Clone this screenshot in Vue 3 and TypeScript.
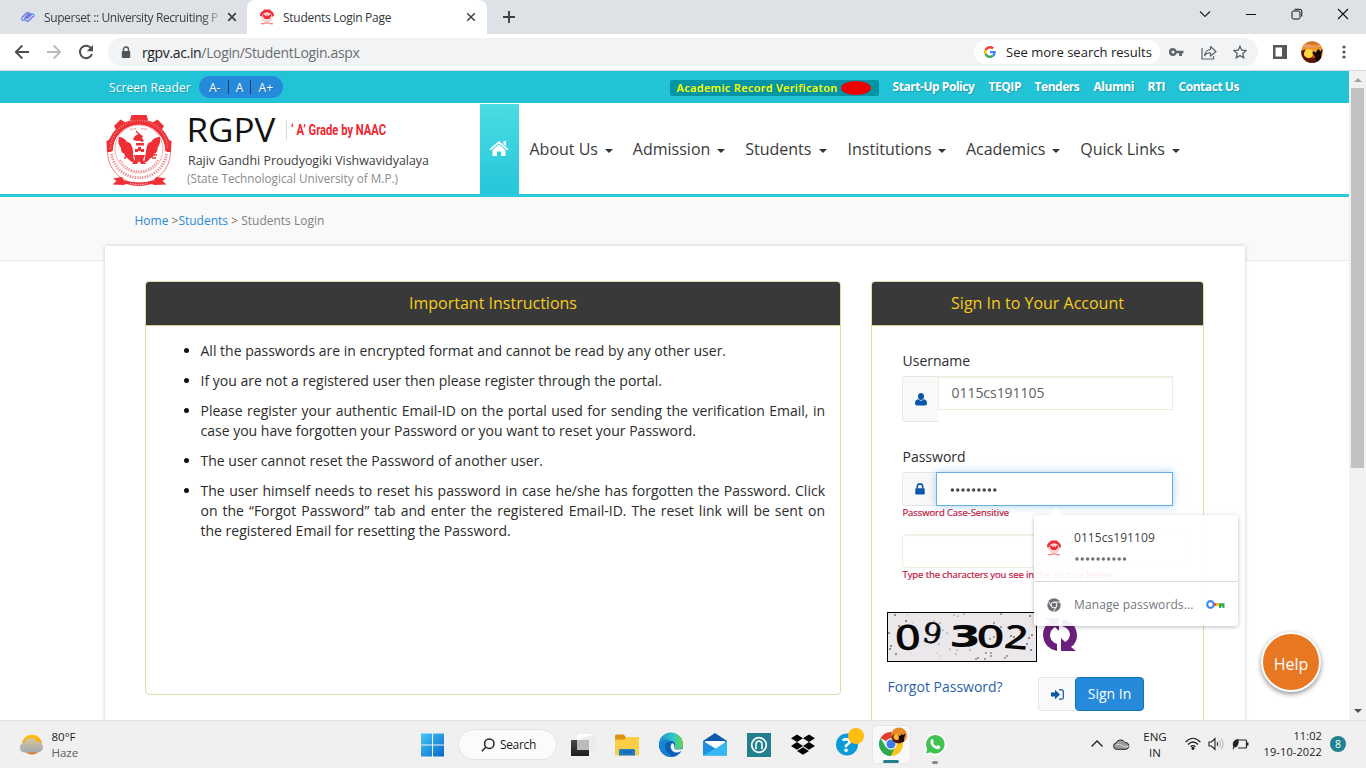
<script setup lang="ts">
interface NavItem { label: string }

const navItems: NavItem[] = [
  { label: 'About Us' },
  { label: 'Admission' },
  { label: 'Students' },
  { label: 'Institutions' },
  { label: 'Academics' },
  { label: 'Quick Links' },
]

const topLinks: string[] = ['Start-Up Policy', 'TEQIP', 'Tenders', 'Alumni', 'RTI', 'Contact Us']

const instructions: string[] = [
  'All the passwords are in encrypted format and cannot be read by any other user.',
  'If you are not a registered user then please register through the portal.',
  'Please register your authentic Email-ID on the portal used for sending the verification Email, in case you have forgotten your Password or you want to reset your Password.',
  'The user cannot reset the Password of another user.',
  'The user himself needs to reset his password in case he/she has forgotten the Password. Click on the “Forgot Password” tab and enter the registered Email-ID. The reset link will be sent on the registered Email for resetting the Password.',
]

// Deterministic speckles for the captcha background
const specks = Array.from({ length: 64 }, (_, i) => ({
  x: (i * 37 + ((i * i * 13) % 29)) % 146 + 2,
  y: (i * 17 + ((i * i * 7) % 23)) % 46 + 2,
  r: 0.35 + (i % 4) * 0.15,
}))
</script>

<template>
  <div class="screen">
    <header class="tabstrip">
      <div class="tab idle">
        <svg class="fav" width="16" height="16" viewBox="0 0 16 16" fill="none" stroke-width="1.300" stroke-linecap="round">
          <path d="M2 8.500l4-4q2-1.500 3 0l-4 4M4 11l6.500-6.500M6 11.500q1.500 1.500 3 0l4-4M7.500 9.500l4.500-4.500" stroke="#6a78e6" />
          <path d="M1.500 9.500q0 2 2.500 2M12 5q3 .3 2 2.500" stroke="#6aa5ee" />
        </svg>
        <span class="tab-title fade">Superset :: University Recruiting P</span>
        <svg class="x" width="10" height="10" viewBox="0 0 10 10"><path d="M1.200 1.200l7.600 7.600M8.800 1.200L1.200 8.800" stroke="#3c4043" stroke-width="1.700" /></svg>
      </div>
      <div class="tab active">
        <svg class="fav" width="16" height="16" viewBox="0 0 16 16">
          <circle cx="8" cy="7" r="6.300" fill="#fbd3d5" />
          <path d="M1 7Q1 3 4 2l1-1.500h6L12 2q3 1 3 5l-1.500.5Q12.500 3.500 8 3.200 3.500 3.500 2.500 7.500z" fill="#ee2a33" />
          <path d="M3.500 5q2 .3 3.500 2.500L8 5.500l1 2Q10.500 5.300 12.500 5q0 3.500-3 5h-3q-3-1.500-3-5z" fill="#ee2a33" />
          <path d="M2 14.300h3.500v1H2zM10.500 14.300H14v1h-3.500zM5.500 13.600h5v1h-5z" fill="#f0555c" />
        </svg>
        <span class="tab-title">Students Login Page</span>
        <svg class="x" width="10" height="10" viewBox="0 0 10 10"><path d="M1.200 1.200l7.600 7.600M8.800 1.200L1.200 8.800" stroke="#3c4043" stroke-width="1.500" /></svg>
      </div>
      <svg class="plus" width="14" height="14" viewBox="0 0 14 14"><path d="M7 1v12M1 7h12" stroke="#3c4043" stroke-width="1.900" /></svg>
      <div class="winctl">
        <svg width="12" height="12" viewBox="0 0 12 12"><path d="M1 3.500l5 5 5-5" fill="none" stroke="#222" stroke-width="1.100" /></svg>
        <svg width="12" height="12" viewBox="0 0 12 12"><path d="M1 6.500h10" stroke="#111" /></svg>
        <svg width="12" height="12" viewBox="0 0 12 12" fill="none" stroke="#111"><rect x="1" y="3" width="8" height="8" rx="1.500" /><path d="M3.500 1.300H9Q10.800 1.300 10.800 3v5.500" /></svg>
        <svg width="12" height="12" viewBox="0 0 12 12"><path d="M1 1l10 10M11 1L1 11" stroke="#111" stroke-width="1.100" /></svg>
      </div>
    </header>

    <div class="toolbar">
      <div class="navbtns">
        <svg width="16" height="16" viewBox="0 0 16 16" fill="none" stroke="#4a4d51" stroke-width="1.800"><path d="M15 8H2M8.300 1.500L1.800 8l6.500 6.500" /></svg>
        <svg width="16" height="16" viewBox="0 0 16 16" fill="none" stroke="#b9bbbe" stroke-width="1.800"><path d="M1 8h13M7.700 1.500L14.200 8l-6.500 6.500" /></svg>
        <svg width="16" height="16" viewBox="0 0 16 16"><path d="M13.300 4.500A6.200 6.200 0 1 0 14 10" fill="none" stroke="#4a4d51" stroke-width="2" /><path d="M15 1v6.200H8.800z" fill="#4a4d51" /></svg>
      </div>
      <div class="omnibox">
        <svg class="lock" width="10" height="13" viewBox="0 0 10 13"><path d="M2.500 5.500V3.500a2.500 2.500 0 0 1 5 0v2" fill="none" stroke="#505357" stroke-width="1.400" /><rect x=".8" y="5" width="8.400" height="7" rx="1" fill="#505357" /></svg>
        <span class="url"><b>rgpv.ac.in</b>/Login/StudentLogin.aspx</span>
        <div class="chip">
          <svg width="12" height="12" viewBox="0 0 48 48"><path fill="#EA4335" d="M24 9.500c3.540 0 6.710 1.220 9.210 3.600l6.850-6.850C35.900 2.380 30.470 0 24 0 14.620 0 6.510 5.380 2.560 13.220l7.980 6.190C12.430 13.720 17.740 9.500 24 9.500z" /><path fill="#4285F4" d="M46.980 24.550c0-1.570-.15-3.090-.38-4.550H24v9.020h12.940c-.58 2.960-2.260 5.480-4.780 7.180l7.730 6c4.510-4.180 7.090-10.360 7.090-17.650z" /><path fill="#FBBC05" d="M10.530 28.590a14.500 14.500 0 0 1 0-9.180l-7.980-6.190a24 24 0 0 0 0 21.560z" /><path fill="#34A853" d="M24 48c6.480 0 11.930-2.130 15.890-5.810l-7.730-6c-2.150 1.450-4.920 2.300-8.160 2.300-6.260 0-11.570-4.220-13.470-9.910l-7.980 6.190C6.510 42.620 14.620 48 24 48z" /></svg>
          <span>See more search results</span>
        </div>
        <svg class="key" width="15" height="8" viewBox="0 0 15 8"><path fill-rule="evenodd" fill="#5f6368" d="M4 0a4 4 0 0 1 3.700 2.700H14.500v2.600H13V8h-2.800V5.300H7.700A4 4 0 1 1 4 0zm0 2.500a1.500 1.500 0 1 0 0 3 1.500 1.500 0 0 0 0-3z" /></svg>
        <svg class="share" width="16" height="15" viewBox="0 0 16 15" fill="none" stroke="#5f6368" stroke-width="1.200"><path d="M1 3v11h11.500v-3" /><path d="M3.500 10.500Q4.500 5 9.500 4.500V1.500l5.500 5-5.500 4.500V8Q6 7.500 3.500 10.500z" stroke-linejoin="round" /></svg>
        <svg class="star" width="14" height="14" viewBox="0 0 14 14"><path d="M7 1.200l1.700 4 4.300.4-3.200 2.900.9 4.300L7 10.600l-3.700 2.200.9-4.300L1 5.600l4.300-.4z" fill="none" stroke="#5f6368" stroke-width="1.300" /></svg>
      </div>
      <svg class="side" width="14" height="14" viewBox="0 0 14 14"><path fill-rule="evenodd" d="M0 0h14v14H0zM2.500 2.500v9H9v-9z" fill="#55585c" /></svg>
      <svg class="avatar" width="22" height="22" viewBox="0 0 22 22">
        <defs>
          <clipPath id="av"><circle cx="11" cy="11" r="10.800" /></clipPath>
          <linearGradient id="sky" x1="0" y1="0" x2="0" y2="1"><stop offset="0" stop-color="#c8631c" /><stop offset=".5" stop-color="#ffae2e" /><stop offset=".7" stop-color="#d2500c" /><stop offset="1" stop-color="#6a1a06" /></linearGradient>
        </defs>
        <g clip-path="url(#av)"><rect width="22" height="22" fill="url(#sky)" /><circle cx="7.500" cy="12.500" r="4.500" fill="#ffd83f" /><path d="M0 5q5-3 10-1t12-1v2Q11 8 0 6z" fill="#e9a070" /><path d="M12 10l3 1.500 1.500-3h2l.5 2.500 2-3 1 .5-2 6v7h-7l1-6-2.500-3z" fill="#150806" /><path d="M0 10q3-2 5-1.500Q2.500 11 3 15l3 2h8l2 5H0z" fill="#5a1506" /></g>
      </svg>
      <svg class="kebab" width="4" height="14" viewBox="0 0 4 14" fill="#505357"><circle cx="2" cy="2" r="1.600" /><circle cx="2" cy="7" r="1.600" /><circle cx="2" cy="12" r="1.600" /></svg>
    </div>

    <div class="viewport">
      <main class="page">
        <div class="topbar">
          <span class="reader">Screen Reader</span>
          <div class="sizes"><span>A-</span><i></i><span>A</span><i></i><span>A+</span></div>
          <div class="verify"><span>Academic Record Verificaton</span><em></em></div>
          <nav class="toplinks"><a v-for="l in topLinks" :key="l">{{ l }}</a></nav>
        </div>

        <div class="masthead">
          <svg class="brand" width="335" height="91" viewBox="105 103 335 91">
            <g>
              <circle cx="139" cy="149" r="31" fill="#fff" />
              <path d="M110 151A29 29 0 1 1 168 151" fill="none" stroke="#ee2f36" stroke-width="5.500" />
              <path d="M131.500 115h15l1.500 5h-18zM114 126l6.500-6.500 5 3-8.500 8.500zM164 126l-6.500-6.500-5 3 8.500 8.500zM106.500 141l5-2v13h-4.500zM171.500 141l-5-2v13h4.500z" fill="#ee2f36" />
              <path d="M110.500 149A28.500 28.500 0 1 1 167.500 149" fill="none" stroke="#fff" stroke-width="1.500" stroke-dasharray="1 1.500" opacity=".45" />
              <path d="M107.500 152a31.500 31.500 0 0 0 63 0" fill="none" stroke="#f08085" stroke-width="1" />
              <circle cx="139" cy="149" r="24" fill="#fff" stroke="#f3999c" stroke-width=".8" />
              <path d="M111.500 154a27.800 27.800 0 0 0 55 0" fill="none" stroke="#ef8a8e" stroke-width="2.800" stroke-dasharray="1.300 1.200" />
              <path d="M120 160a21.500 21.500 0 0 0 38 0" fill="none" stroke="#ef8a8e" stroke-width="2" stroke-dasharray="1.300 1.200" />
              <path d="M130 129.500l6-1M141 128.500l7 1" fill="none" stroke="#f3999c" stroke-width="1.500" stroke-dasharray="1.500 .8" />
              <path d="M119 137Q124 137 127 142 132 142 133 151L133.500 158 135 162Q131 163 127.500 158 125 158 124.500 154 120.500 152 121 148 117 143 119 137z" fill="#ee2f36" />
              <path d="M160 137Q154 137 151 142 147 142 146 151L145 158 144 162Q147 163 150.500 158 153 158 154 154 158 152 157.500 148 161 143 160 137z" fill="#ee2f36" />
              <path d="M133 140q1-5 6-6l4 2-1 2 2 3-2 1q-3-2-5-1zM136 143h8v2.500h-8zM135 149h3v3h-3zM141 149h3v3h-3zM138 147h3v4h-3z" fill="#ee2f36" />
              <path d="M134 155h11l-2 5 3 4h-5l-2-3-2 3h-5l3-4z" fill="#ee2f36" />
              <path d="M136 131l5 5" stroke="#ee2f36" stroke-width="1.300" />
              <path d="M124 158h2M151 155h6M152 158h4" stroke="#ee2f36" stroke-width="1.500" />
              <path d="M113 178.500l9-1.500 2 3.500q15 4 30 0l2-3.500 10 1.500-3.500 2.500 4 3.500-12 .5-3-1q-12.500 4-25 0l-3 1-11-.5 4-3.500z" fill="#ee2f36" />
              <path d="M130 183.500q9 1.800 18 0" fill="none" stroke="#fff" stroke-width="1" stroke-dasharray="1.300 1.200" />
            </g>
            <text x="186.500" y="142" class="b1" textLength="89" lengthAdjust="spacingAndGlyphs">RGPV</text>
            <path d="M286.500 120v20" stroke="#d6dadd" />
            <text x="291" y="135" class="b2" textLength="95" lengthAdjust="spacingAndGlyphs">‘ A’ Grade by NAAC</text>
            <text x="188" y="165" class="b3" textLength="241" lengthAdjust="spacingAndGlyphs">Rajiv Gandhi Proudyogiki Vishwavidyalaya</text>
            <text x="187" y="183" class="b4" textLength="211" lengthAdjust="spacingAndGlyphs">(State Technological University of M.P.)</text>
          </svg>
          <div class="home">
            <svg width="20" height="17" viewBox="0 0 20 17" fill="#fff"><path d="M10 1l9.500 8-1.200 1.300L10 3.400 1.700 10.300.5 9z" /><path d="M14.500 1H17v5l-2.500-2zM3.500 10L10 4.600 16.500 10v6H12v-4.500H8V16H3.500z" /></svg>
          </div>
          <nav class="mainnav">
            <a v-for="n in navItems" :key="n.label"><span>{{ n.label }}</span><i class="caret"></i></a>
          </nav>
        </div>

        <div class="crumbs"><a>Home</a><b>&nbsp;&gt;</b><a>Students</a><b>&nbsp;&gt;&nbsp;</b><span>Students Login</span></div>

        <div class="card">
          <section class="panel info">
            <h2>Important Instructions</h2>
            <ul><li v-for="t in instructions" :key="t">{{ t }}</li></ul>
          </section>

          <section class="panel login">
            <h2>Sign In to Your Account</h2>
            <div class="form">
              <label>Username</label>
              <div class="group user">
                <div class="addon"><svg width="12" height="13" viewBox="0 0 12 13" fill="#0b56a8"><ellipse cx="6" cy="3.600" rx="3" ry="3.500" /><path d="M3 6.300Q6 9 9 6.300q3 .4 3 4.200 0 2-2 2H2q-2 0-2-2 0-3.800 3-4.200z" /></svg></div>
                <div class="input">0115cs191105</div>
              </div>
              <label>Password</label>
              <div class="group pass">
                <div class="addon"><svg width="10" height="12" viewBox="0 0 10 12"><path d="M2.300 5.500V3.600a2.700 2.700 0 0 1 5.400 0v2" fill="none" stroke="#0b56a8" stroke-width="1.600" /><rect x=".3" y="5.200" width="9.400" height="6.300" rx=".8" fill="#0b56a8" /></svg></div>
                <div class="input focus"><svg width="48" height="6" viewBox="0 0 48 6"><circle v-for="n in 9" :key="n" :cx="n * 5.3 - 2.9" cy="3" r="1.750" fill="#484848" /></svg></div>
              </div>
              <small>Password Case-Sensitive</small>
              <div class="input captcha-in"></div>
              <small>Type the characters you see in the picture below</small>
            </div>
            <div class="captcha">
              <svg class="cap" width="150" height="50" viewBox="0 0 150 50">
                <rect x=".5" y=".5" width="149" height="49" fill="#ece7ea" stroke="#000" />
                <circle v-for="(s, i) in specks" :key="i" :cx="s.x" :cy="s.y" :r="s.r" fill="#1c1c14" />
                <g class="digits">
                  <text x="8" y="38" font-size="35" textLength="26" lengthAdjust="spacingAndGlyphs" transform="rotate(-4 20 28)">0</text>
                  <text x="36" y="31" class="nine" font-size="28" textLength="19" lengthAdjust="spacingAndGlyphs" transform="rotate(10 45 20)">9</text>
                  <text x="62" y="34.500" class="three" font-size="30" textLength="32" lengthAdjust="spacingAndGlyphs">3</text>
                  <text x="89.500" y="36" font-size="32" textLength="28" lengthAdjust="spacingAndGlyphs">0</text>
                  <text x="117" y="37" font-size="33" textLength="24" lengthAdjust="spacingAndGlyphs" transform="rotate(5 130 27)">2</text>
                </g>
              </svg>
              <svg class="refresh" width="36" height="36" viewBox="0 0 36 36" fill="#6a1f7c"><path d="M15 34Q2 31 1 18 1 9 8 5L3 1h14v13l-4-4q-5 3-5 9 1 6 7 8z" /><path d="M20 2Q34 5 35 18q0 8-6 12l5 4H19V21l4 4q5-3 5-8-1-6-8-8z" /></svg>
            </div>
            <div class="actions">
              <a>Forgot Password?</a>
              <div class="addon"><svg width="13" height="11" viewBox="0 0 13 11"><path d="M0 3.500h4V.8l5 4.700-5 4.700V7.500H0z" fill="#0b56a8" /><path d="M8 .8h2.500q1.800 0 1.800 1.500v6.400q0 1.500-1.800 1.500H8" fill="none" stroke="#0b56a8" stroke-width="1.200" /></svg></div>
              <button>Sign In</button>
            </div>
          </section>
        </div>

        <div class="popup">
          <div class="row account">
            <svg width="16" height="16" viewBox="0 0 16 16">
              <circle cx="8" cy="7" r="6.300" fill="#fbd3d5" />
              <path d="M1 7Q1 3 4 2l1-1.500h6L12 2q3 1 3 5l-1.500.5Q12.500 3.500 8 3.200 3.500 3.500 2.500 7.500z" fill="#ee2a33" />
              <path d="M3.500 5q2 .3 3.500 2.500L8 5.500l1 2Q10.500 5.300 12.500 5q0 3.500-3 5h-3q-3-1.500-3-5z" fill="#ee2a33" />
              <path d="M2 14.300h3.500v1H2zM10.500 14.300H14v1h-3.500zM5.500 13.600h5v1h-5z" fill="#f0555c" />
            </svg>
            <div><p>0115cs191109</p><svg class="dots" width="54" height="6" viewBox="0 0 54 6"><circle v-for="n in 10" :key="n" :cx="n * 5.28 - 2.3" cy="3" r="1.750" fill="#6f7377" /></svg></div>
          </div>
          <div class="row manage">
            <svg width="14" height="14" viewBox="0 0 14 14"><circle cx="7" cy="7" r="6.700" fill="#6f7377" /><circle cx="7" cy="7" r="2.900" fill="#6f7377" stroke="#fff" stroke-width="1" /><path d="M7 4.100h6M4.500 8.500l-3-5M9.500 8.500l-3 5" stroke="#fff" stroke-width=".9" /></svg>
            <span>Manage passwords...</span>
            <svg class="gkey" width="19" height="9" viewBox="0 0 19 9"><circle cx="4.500" cy="4.500" r="3.300" fill="none" stroke="#4285f4" stroke-width="2.200" /><path d="M8 3.200h3v2.600H8z" fill="#ea4335" /><path d="M10 3.200h3.500v2.600H10z" fill="#fbbc05" /><path d="M13 3.200h5.500V8h-1.800V6.500h-1.500V8H13z" fill="#34a853" /></svg>
          </div>
        </div>
        <div class="help">Help</div>
      </main>

      <aside class="scroll"><i class="up"></i><div class="thumb"></div><i class="down"></i></aside>
    </div>

    <footer class="taskbar">
      <div class="weather">
        <svg width="26" height="24" viewBox="0 0 26 24">
          <defs><linearGradient id="sun" x1="0" y1="0" x2="0" y2="1"><stop offset="0" stop-color="#fdc70c" /><stop offset="1" stop-color="#f2691e" /></linearGradient><linearGradient id="cl" x1="0" y1="0" x2="0" y2="1"><stop offset="0" stop-color="#d4c8a4" /><stop offset="1" stop-color="#9fa9b5" /></linearGradient></defs>
          <circle cx="13" cy="11.500" r="10" fill="url(#sun)" />
          <path d="M6 19.500a5 5 0 0 1-.5-10 7 7 0 0 1 12.500-1A5.500 5.500 0 0 1 19 19.500z" fill="url(#cl)" opacity=".95" />
        </svg>
        <div><p>80°F</p><p class="dim">Haze</p></div>
      </div>
      <div class="apps">
        <div class="slot"><svg width="24" height="24" viewBox="0 0 24 24"><defs><linearGradient id="win" x1="0" y1="0" x2="1" y2="1"><stop offset="0" stop-color="#45c8f8" /><stop offset="1" stop-color="#0669c8" /></linearGradient></defs><path fill="url(#win)" d="M1 .5h11v11H1zM13 .5h11v11H13zM1 12.500h11v11H1zM13 12.500h11v11H13z" /></svg></div>
        <div class="search"><svg width="14" height="14" viewBox="0 0 14 14" fill="none" stroke="#222" stroke-width="1.500"><circle cx="8.300" cy="5.700" r="4.700" /><path d="M5 9L.8 13.200" /></svg><span>Search</span></div>
        <div class="slot view"><svg width="24" height="24" viewBox="0 0 24 24"><defs><linearGradient id="tv" x1="0" y1="0" x2="0" y2="1"><stop offset="0" stop-color="#4a4a4a" /><stop offset="1" stop-color="#1d1d1d" /></linearGradient></defs><rect x="6" y="1" width="18" height="16" fill="#ececec" stroke="#ddd" stroke-width=".5" /><path d="M6 1h18l-18 6z" fill="#fff" /><rect y="7" width="18" height="16" rx=".5" fill="url(#tv)" /><rect x="6" y="7" width="12" height="10" fill="#bbb" /></svg></div>
        <div class="slot"><svg width="24" height="24" viewBox="0 0 24 24"><path d="M0 3Q0 1.500 1.500 1.500h7L11 4v4H0z" fill="#d99412" /><path d="M0 6.500h9L11.500 4H23q1 0 1 1v16.500q0 1-1 1H1q-1 0-1-1z" fill="#fcce45" /><path d="M4 22.500v-5q0-1.500 1.500-1.500h13q1.500 0 1.500 1.500v5z" fill="#1979c4" /><path d="M8 18.500h8v1H8z" fill="#0d5797" /></svg></div>
        <div class="slot"><svg width="26" height="26" viewBox="0 0 26 26"><defs><linearGradient id="e1" x1="0" y1="0" x2="1" y2="0"><stop offset="0" stop-color="#1a8fd8" /><stop offset=".6" stop-color="#31c5c4" /><stop offset="1" stop-color="#6ed446" /></linearGradient></defs><circle cx="13" cy="13" r="12" fill="#0f5fb4" /><path d="M1 13A12 12 0 0 1 25 12q0 5-5 5.500-4 0-4-2.500 1-1 1-2.500 0-3.500-4-3.500-7 0-8 8-1 1-2.500 1Q1 16 1 13z" fill="url(#e1)" /><path d="M1 12q4-6 11-4Q7 10 7 15q0 6 8 9.700Q3 25 1 12z" fill="#1683d5" /><path d="M14 11q3 1 2 4 0 3 5 2.500 2 0 3.500-1.200l-1 2.700q-5 3-9 0-3.500-4-.5-8z" fill="#eef4f6" /></svg></div>
        <div class="slot"><svg width="26" height="24" viewBox="0 0 26 24"><path d="M1 8l12-8 12 8v4H1z" fill="#0d5ba8" /><path d="M3 8h20v6L13 18 3 14z" fill="#fff" /><path d="M1 8l24 14.500H1z" fill="#1f8fe0" /><path d="M25 8v14.500H1L13 16z" fill="#35b8f1" /></svg></div>
        <div class="slot"><svg width="24" height="24" viewBox="0 0 24 24"><rect width="24" height="24" fill="#217f8e" /><circle cx="12" cy="12" r="7.300" fill="none" stroke="#fff" stroke-width="1.700" /><path d="M9 15.500V11q0-2.500 3-3 3 .5 3 3v4.500" fill="none" stroke="#fff" stroke-width="1.500" /><path d="M8 15.500h2M14 15.500h2" stroke="#fff" /></svg></div>
        <div class="slot"><svg width="24" height="22" viewBox="0 0 24 22" fill="#050505"><path d="M6 .5l6 3.800-6 3.800-6-3.800zM18 .5l6 3.800-6 3.800-6-3.800zM6 8.100l6 3.800-6 3.800-6-3.800zM18 8.100l6 3.800-6 3.800-6-3.800zM12 13.300l6 3.700-6 3.800L6 17z" /></svg></div>
        <div class="slot"><svg class="over" width="30" height="30" viewBox="0 0 30 30"><circle cx="12" cy="16.500" r="11" fill="#0d9ad9" /><text x="11.500" y="24" class="q">?</text><circle cx="21" cy="8" r="8" fill="#fdbc0e" /></svg></div>
        <div class="slot chrome"><svg width="30" height="30" viewBox="0 0 30 30"><path d="M14 17L3.600 11A12 12 0 0 1 24.400 11H14z" fill="#e33b2e" /><path d="M14 17l-5.200 3L3.600 11A12 12 0 0 0 14 29l5.200-9z" fill="#2da94f" /><path d="M14 17h5.200L14 29A12 12 0 0 0 24.400 11H14z" fill="#fcc31e" /><circle cx="14" cy="17" r="5.700" fill="#fff" /><circle cx="14" cy="17" r="4.500" fill="#3b7ded" /><circle cx="22" cy="8.500" r="8" fill="#e78a2a" /><path d="M14.500 10q1-3 5-3l1 5 3 1v3q-5 1-7.500-2z" fill="#5a1506" /><circle cx="19.500" cy="10" r="3" fill="#ffb92e" /><path d="M21.500 8l2 1 1-2 1.500 1 2.500-1.500-1.500 5v3l-4 1.500-1-4z" fill="#150806" /></svg><u></u></div>
        <div class="slot wa"><svg width="24" height="24" viewBox="0 0 24 24"><path d="M1 22.500l1.600-6A11 11 0 1 1 7 21z" fill="#fff" /><path d="M3 20.500l1.200-4.600a9.300 9.300 0 1 1 3.300 3.400z" fill="#3fc351" /><path d="M8 6.500q1-1 2 0l.8 2q0 .6-.8 1.500 1.200 2.300 3.500 3.200l1.300-1.200 2.400 1.200q.3 3-2.700 3-3-.2-5.500-3Q6.500 9 8 6.500z" fill="#fff" /></svg><u class="small"></u></div>
      </div>
      <div class="tray">
        <svg width="14" height="9" viewBox="0 0 14 9"><path d="M1.500 7.500L7 2l5.500 5.500" fill="none" stroke="#222" stroke-width="1.400" /></svg>
        <svg width="17" height="12" viewBox="0 0 17 12"><path d="M4 11.300A3.200 3.200 0 0 1 3 5a5 5 0 0 1 9-.5 3.500 3.500 0 0 1 1.500 6.800z" fill="#9b9b9b" stroke="#222" stroke-width="1" /><path d="M3 7q4-2 7 1l3 1 3-1" fill="none" stroke="#d8d8d8" /></svg>
        <div class="lang"><p>ENG</p><p>IN</p></div>
        <svg width="16" height="13" viewBox="0 0 16 13" fill="none" stroke="#222" stroke-width="1.200"><path d="M.6 5q7.400-7.500 14.800 0M3 7.500q5-5 10 0M5.500 9.800q2.500-2.500 5 0" /><circle cx="8" cy="11.300" r="1" fill="#222" /></svg>
        <svg width="16" height="14" viewBox="0 0 16 14" fill="none" stroke="#222" stroke-width="1.100"><path d="M1 5h2.500L7 1.500v11L3.500 9H1z" /><path d="M9 5q1.500 2 0 4" /><path d="M11 3.200q3 3.800 0 7.600M13.200 1.800q3.800 5.200 0 10.400" stroke="#bbb" /></svg>
        <svg class="bat" width="17" height="12" viewBox="0 0 17 12"><path d="M7 2h6.500q1 0 1 1v6q0 1-1 1H6" fill="none" stroke="#222" stroke-width="1.200" /><path d="M15 4.500h1.500v3H15zM6.500.8Q7.500 6 5 8.500 3.500 9.800 2 9.200L1.500 11.500.5 11l.8-2.200Q-.2 4.500 2.500 2.500 4 1.500 6.500.8z" fill="#222" /></svg>
        <div class="clock"><p>11:02</p><p>19-10-2022</p></div>
        <div class="badge">8</div>
      </div>
    </footer>
  </div>
</template>

<style>
html, body { margin: 0; overflow: hidden; }
</style>

<style scoped>
* { box-sizing: border-box; }
p, h2, ul { margin: 0; padding: 0; font-weight: 400; }
.screen { width: 1366px; height: 768px; overflow: hidden; display: flex; flex-direction: column; font-family: "Open Sans", "Noto Sans", sans-serif; background: #fff; color: #333; white-space: nowrap; }
svg { display: block; flex: none; }

.tabstrip { height: 34px; background: #dee1e6; display: flex; align-items: center; flex: none; }
.tab { height: 34px; display: flex; align-items: center; font-size: 12px; color: #3c4043; }
.idle { width: 247px; padding: 0 10px 0 20px; }
.active { width: 240px; padding: 0 11px 0 12px; background: #fff; border-radius: 8px 8px 0 0; color: #33363a; }
.tab-title { margin-left: 8px; letter-spacing: -0.28px; flex: 1; }
.tab-title.fade { letter-spacing: -0.4px; flex: none; width: 177px; margin-right: 6px; -webkit-mask-image: linear-gradient(90deg, #000 158px, transparent 181px); mask-image: linear-gradient(90deg, #000 158px, transparent 181px); }
.x { margin-top: -1px; }
.plus { margin-left: 15px; }
.winctl { margin-left: auto; margin-right: 17px; margin-top: -6px; display: flex; gap: 34px; }

.toolbar { height: 37px; flex: none; display: flex; align-items: center; border-bottom: 1px solid #d9dbdd; padding-left: 14px; }
.navbtns { display: flex; gap: 16px; width: 94px; }
.omnibox { width: 1150px; height: 28px; border-radius: 14px; background: #f1f3f4; display: flex; align-items: center; }
.lock { margin-left: 13px; }
.url { margin-left: 11px; font-size: 14px; letter-spacing: -0.35px; color: #6b6e72; }
.url b { font-weight: 400; color: #202124; }
.chip { margin-left: auto; width: 186px; height: 24px; border-radius: 12px; background: #fff; display: flex; align-items: center; padding-left: 10px; font-size: 13px; color: #222; }
.chip span { margin-left: 10px; letter-spacing: .02px; }
.key { margin-left: 9px; }
.share { margin-left: 17px; }
.star { margin-left: 16px; margin-right: 11px; }
.side { margin-left: 15px; }
.avatar { margin-left: 14px; }
.kebab { margin-left: 19px; }

.viewport { flex: 1; display: flex; min-height: 0; overflow: hidden; }
.page { width: 1349px; height: 649px; position: relative; overflow: hidden; }
.topbar { height: 32px; background: #23c3d7; display: flex; align-items: center; padding-left: 109px; color: #fff; font-size: 12px; text-shadow: 1px 1px 1px rgba(0, 0, 0, .2); }
.reader { width: 90px; letter-spacing: .05px; }
.sizes { width: 84px; height: 22px; border-radius: 11px; background: #268adb; display: flex; align-items: center; justify-content: space-between; padding: 0 10px; }
.sizes i { width: 1px; height: 14px; background: #1d3b66; }
.verify { margin-left: 387px; width: 209px; height: 16px; margin-top: 2px; border-radius: 2px; background: #0195a5; display: flex; align-items: center; padding: 0 0 1px 6.500px; text-shadow: none; color: #ff0; font: 600 11px "Noto Sans", sans-serif; }
.verify span { width: 162px; letter-spacing: .29px; }
.verify em { width: 30px; height: 14px; margin-left: 2px; border-radius: 50%; background: #ec0000; }
.toplinks { display: grid; grid-template-columns: 96px 46px 59px 54px 31px 62px; margin-left: 13.500px; font-weight: 700; letter-spacing: -0.45px; margin-top: -1px; }
.masthead { height: 94px; border-bottom: 3px solid #2ccadd; display: flex; }
.brand { margin-left: 105px; }
.b1 { font: 400 33px "Open Sans", sans-serif; fill: #111; }
.b2 { font: 700 15px Roboto, sans-serif; fill: #f0252f; }
.b3 { font: 400 12.500px "Open Sans", sans-serif; fill: #3d3d3d; }
.b4 { font: 400 12px "Open Sans", sans-serif; fill: #8b8b8b; }
.home { margin: 1px 0 0 40px; width: 39px; height: 90px; background: linear-gradient(#4adde2, #27c6da); display: flex; align-items: center; justify-content: center; }
.home svg { margin: 0 1px 2px 0; }
.mainnav { margin-left: 10.500px; display: grid; grid-template-columns: 83px 92px 82px 98px 94px 100px; column-gap: 20.350px; align-items: center; font-size: 16px; color: #3a3a3a; }
.mainnav a { display: flex; justify-content: space-between; align-items: center; }
.caret { margin-top: 4px; border: 4px solid transparent; border-top-color: #333; border-bottom: 0; }
.crumbs { height: 64px; background: #f9f9f9; border-bottom: 1px solid #eaeaea; display: flex; padding: 15px 0 0 134.500px; font-size: 12px; line-height: 17px; color: #808080; }
.crumbs a { color: #268adb; }
.crumbs b { font-weight: 400; color: #8a6a50; }
.card { position: relative; width: 1140px; height: 520px; margin: -15px 0 0 105px; background: #fff; box-shadow: 0 0 4px rgba(0, 0, 0, .2); padding: 35px 41px; display: flex; align-items: flex-start; justify-content: space-between; }
.panel { border: 1px solid #dbdcae; border-radius: 4px; }
.panel h2 { height: 44px; line-height: 42px; background: #393939; color: #f5cd1b; font-size: 16px; text-align: center; border-bottom: 1px solid #d9c98a; border-radius: 3px 3px 0 0; }
.info { width: 696px; height: 414px; margin-left: -1px; }
.info ul { padding: 15px 15px 0 54.500px; white-space: normal; }
.info li { font-size: 14px; line-height: 20px; margin-bottom: 10px; text-align: justify; color: #2c2c2c; }
.info li::marker { color: #111; }
.login { width: 333px; height: 500px; }
.form { padding: 25px 30px 0; }
label { display: block; font-size: 14px; line-height: 20px; color: #2c2c2c; padding-left: .5px; }
.group { display: flex; align-items: flex-start; margin-top: 5px; }
.addon { width: 36px; height: 46px; background: #f9f9f9; border: 1px solid #e6e6e6; border-right: 0; border-radius: 4px 0 0 4px; display: flex; align-items: center; justify-content: center; }
.user { margin-bottom: 25px; }
.pass .addon { width: 34px; height: 34px; }
.input { flex: 1; height: 34px; border: 1px solid #eeeedd; background: #fff; padding: 0 12.500px; font-size: 14px; line-height: 32px; color: #606060; letter-spacing: -0.04px; box-shadow: inset 0 1px 1px rgba(120, 120, 60, .1); }
.input.focus { border-color: #66afe9; box-shadow: 0 0 8px rgba(102, 175, 233, .6); display: flex; align-items: center; padding: 2px 13px 0; z-index: 1; }
small { display: block; font-size: 9.500px; line-height: 13px; color: #c30f3b; -webkit-text-stroke: .2px #c30f3b; letter-spacing: -0.09px; padding-left: .5px; }
.captcha-in { margin: 15px 0 0; width: 286px; border-radius: 4px; }
.captcha { display: flex; margin: 31px 0 0 15px; }
.refresh { margin: 5px 0 0 5px; }
.digits { font-family: "Open Sans", sans-serif; font-weight: 600; fill: #080808; }
.nine { font-family: "DejaVu Serif", serif; font-weight: 400; stroke: #080808; stroke-width: .6; }
.three { font-family: "DejaVu Sans", sans-serif; font-weight: 700; }
.actions { display: flex; margin: 15px 0 0 15.500px; font-size: 14px; }
.actions a { width: 150.500px; color: #2a62aa; line-height: 20px; }
.actions .addon { width: 37px; height: 34px; }
button { width: 69px; height: 34px; background: #268adb; border: 1px solid #1176b8; border-radius: 4px; color: #fff; font: 14px "Open Sans", sans-serif; padding: 0 0 1px; }
.popup { position: absolute; z-index: 5; left: 1034px; top: 444px; width: 204px; height: 111px; background: rgba(255, 255, 255, .93); border-radius: 4px; box-shadow: 0 1px 4px rgba(0, 0, 0, .26); }
.popup::before { content: ""; position: absolute; left: 14px; top: -7px; border: 8px solid transparent; border-bottom: 7px solid #fff; border-top: 0; }
.row { display: flex; align-items: center; padding-left: 12px; font-size: 12px; color: #444; }
.account { height: 67px; border-bottom: 1px solid #dadce0; }
.account > div { margin-left: 12px; height: 38px; }
.account p { line-height: 18px; letter-spacing: .06px; }
.dots { margin-top: 9px; }
.manage { height: 45px; padding-left: 13px; color: #74787c; }
.manage span { margin-left: 13px; width: 132px; letter-spacing: .12px; }
.help { position: absolute; left: 1261px; top: 561px; width: 60px; height: 60px; border-radius: 50%; background: #e87722; border: 2px solid #fff; box-shadow: 0 2px 5px rgba(0, 0, 0, .45); color: #fff; font: 500 16px/60px "Open Sans", sans-serif; text-align: center; }
.scroll { width: 17px; background: #f1f1f1; display: flex; flex-direction: column; align-items: center; padding: 7px 0; }
.up { border: 4px solid transparent; border-bottom-color: #a3a3a3; border-top: 0; }
.thumb { width: 13px; height: 380px; margin-top: 6px; background: #c1c1c1; }
.down { margin-top: auto; border: 4px solid transparent; border-top-color: #505050; border-bottom: 0; }

.taskbar { height: 48px; flex: none; background: #f0f0f0; border-top: 1px solid #e2e2e2; display: flex; align-items: center; color: #1c1c1c; font-size: 11.500px; }
.weather { width: 410px; padding-left: 19px; display: flex; align-items: center; line-height: 16px; }
.weather > div { margin: 0 0 0 6.500px; font-size: 11.500px; }
.weather .dim { color: #5c5c5c; }
.apps { width: 675px; display: flex; align-items: center; }
.slot { width: 44px; height: 40px; display: flex; align-items: center; justify-content: center; position: relative; }
.search { width: 99px; height: 31px; margin-left: 4px; border-radius: 16px; background: #fbfbfb; border: 1px solid #e4e4e4; display: flex; align-items: center; padding-left: 22px; font-size: 12px; letter-spacing: -0.35px; }
.search span { margin-left: 5px; }
.view { margin-left: 4px; }
.over { margin-top: -4px; margin-left: 5px; }
.q { font: 700 20px "Noto Sans", sans-serif; fill: #fff; text-anchor: middle; }
.chrome { width: 39px; height: 39px; margin: 0 2px 0 3px; background: #f9f9f9; border: 1px solid #e6e6e6; border-radius: 4px; }
.chrome svg { margin-top: -5px; margin-left: 0; }
u { position: absolute; bottom: 0; left: 11px; width: 16px; height: 3px; border-radius: 2px; background: #217f8e; }
.chrome u { left: 10px; }
u.small { left: 19px; width: 6px; bottom: 1px; background: #888; }
.tray { display: grid; grid-template-columns: 24px 24px 44px 32px 14px 36px 63px 32px; align-items: center; justify-items: center; line-height: 16px; text-align: center; }
.tray svg { margin-bottom: 2px; }
.bat { margin-left: -1px; }
.lang { margin-top: 0; }
.clock { text-align: right; justify-self: end; font-size: 11px; line-height: 16px; letter-spacing: .1px; margin-top: -2px; width: 63px; }
.badge { width: 16px; height: 16px; border-radius: 50%; background: #217f8e; color: #fff; font-size: 10.500px; line-height: 16px; margin-bottom: 2px; }
</style>
